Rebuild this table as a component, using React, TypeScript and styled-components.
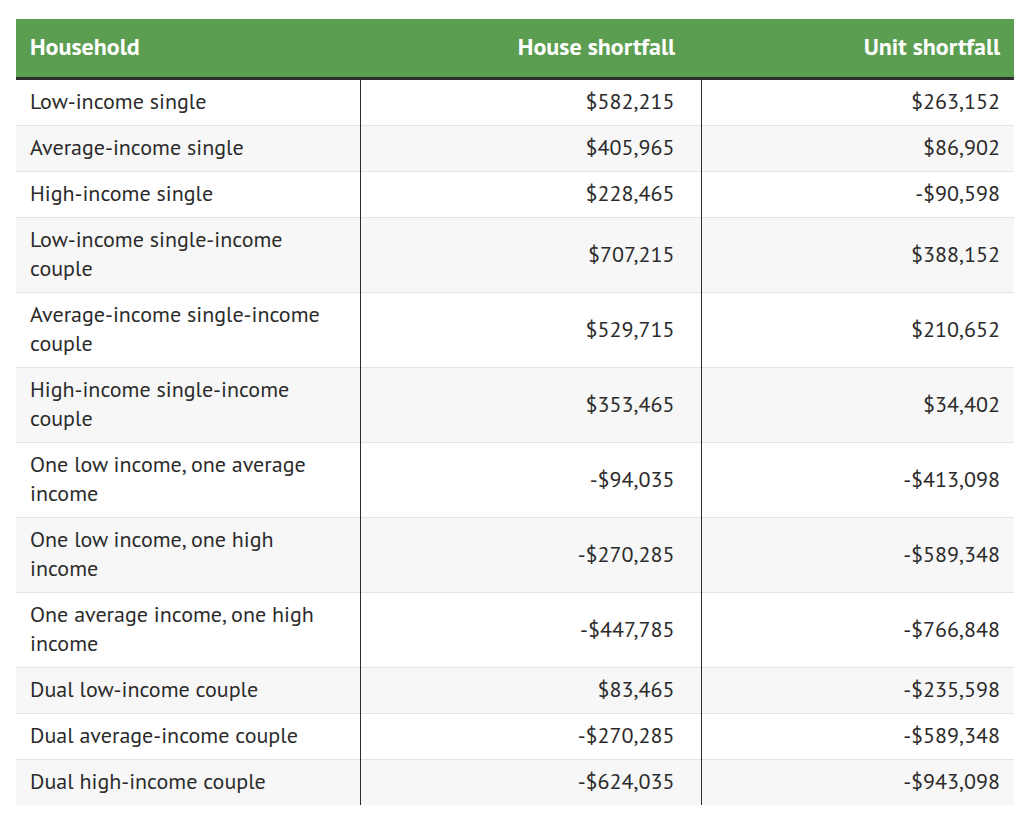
import React from "react";
import styled, { createGlobalStyle } from "styled-components";

const Global = createGlobalStyle`
  html, body { margin: 0; padding: 0; background: #ffffff; }
  body { font-family: "PT Sans", Lato, "Liberation Sans", sans-serif; color: #2b2b2b; }
`;

const Page = styled.div`
  padding: 19px 18px 0 16px;
`;

const Table = styled.table`
  width: 998px;
  border-collapse: collapse;
  table-layout: fixed;
  font-size: 22px;
  line-height: 29px;
`;

const HeadCell = styled.th<{ $align: "left" | "right"; $pr: number }>`
  background: #5c9e51;
  color: #ffffff;
  font-size: 24px;
  font-weight: 700;
  text-align: ${(p) => p.$align};
  padding: 13px ${(p) => p.$pr}px 16px 14px;
  border-bottom: 3px solid #2d2d2d;
`;

const Row = styled.tr<{ $striped: boolean }>`
  background: ${(p) => (p.$striped ? "#f7f7f7" : "#ffffff")};
  border-top: 1px solid #e4e4e4;
  &:first-child { border-top: none; }
`;

const Cell = styled.td<{ $align: "left" | "right"; $pr: number; $divider: boolean }>`
  text-align: ${(p) => p.$align};
  padding: 7px ${(p) => p.$pr}px 9px 14px;
  border-right: ${(p) => (p.$divider ? "1px solid #2d2d2d" : "none")};
  vertical-align: middle;
`;

const rows: [string, string, string][] = [
  ["Low-income single", "$582,215", "$263,152"],
  ["Average-income single", "$405,965", "$86,902"],
  ["High-income single", "$228,465", "-$90,598"],
  ["Low-income single-income couple", "$707,215", "$388,152"],
  ["Average-income single-income couple", "$529,715", "$210,652"],
  ["High-income single-income couple", "$353,465", "$34,402"],
  ["One low income, one average income", "-$94,035", "-$413,098"],
  ["One low income, one high income", "-$270,285", "-$589,348"],
  ["One average income, one high income", "-$447,785", "-$766,848"],
  ["Dual low-income couple", "$83,465", "-$235,598"],
  ["Dual average-income couple", "-$270,285", "-$589,348"],
  ["Dual high-income couple", "-$624,035", "-$943,098"],
];

export default function App() {
  return (
    <>
      <Global />
      <Page>
        <Table>
          <colgroup>
            <col style={{ width: 344 }} />
            <col style={{ width: 341 }} />
            <col style={{ width: 313 }} />
          </colgroup>
          <thead>
            <tr>
              <HeadCell $align="left" $pr={14}>Household</HeadCell>
              <HeadCell $align="right" $pr={26}>House shortfall</HeadCell>
              <HeadCell $align="right" $pr={14}>Unit shortfall</HeadCell>
            </tr>
          </thead>
          <tbody>
            {rows.map((r, i) => (
              <Row key={i} $striped={i % 2 === 1}>
                <Cell $align="left" $pr={14} $divider>{r[0]}</Cell>
                <Cell $align="right" $pr={26} $divider>{r[1]}</Cell>
                <Cell $align="right" $pr={14} $divider={false}>{r[2]}</Cell>
              </Row>
            ))}
          </tbody>
        </Table>
      </Page>
    </>
  );
}
